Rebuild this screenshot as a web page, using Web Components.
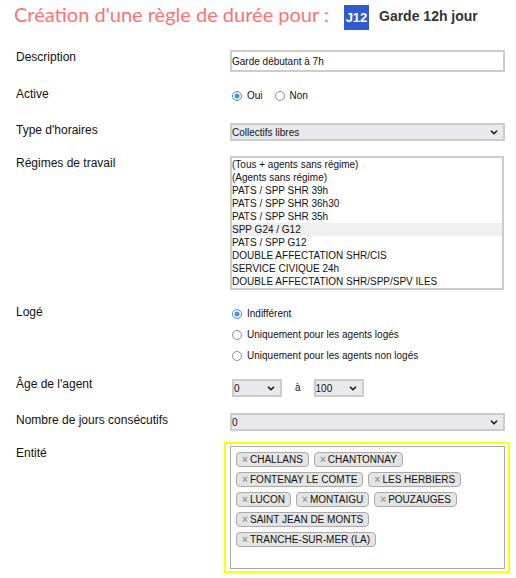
<!DOCTYPE html>
<html lang="fr">
<head>
<meta charset="utf-8">
<title>Création d'une règle de durée</title>
<style>
body { margin: 0; background: #fff; color: #111; font-family: "Liberation Sans", Arial, sans-serif; }
</style>
</head>
<body>
<rule-form></rule-form>

<template id="rule-header">
<style>
:host { display: flex; align-items: flex-start; height: 25px; padding: 5px 11px 0 14px; white-space: nowrap; }
h1 { margin: -3px 0 0; font: 400 20px/24px Lato, Carlito, sans-serif; color: #ff7272; }
.code { flex: none; width: 25px; margin-left: 15px; font-weight: 700; font-size: 13px; line-height: 25px; text-align: center; color: #fff; background: #325bcd; }
.name { margin-left: 10px; font-weight: 700; font-size: 14px; line-height: 23px; color: #333; }
</style>
<h1><slot></slot></h1>
<span class="code"><slot name="code"></slot></span>
<span class="name"><slot name="name"></slot></span>
</template>

<template id="form-row">
<style>
:host { display: grid; grid-template-columns: 214px minmax(0, 1fr); align-items: start; }
.label { font-size: 12px; line-height: 14px; }
</style>
<div class="label"><slot name="label"></slot></div>
<div class="field"><slot></slot></div>
</template>

<template id="select-box">
<style>
:host { display: grid; align-items: center; }
:host([short]) { width: 50px; }
::slotted(select) { grid-area: 1 / 1; appearance: none; box-sizing: border-box; width: 100%; height: 18px; margin: 0; padding: 1px 0 0; border: 2px solid #ccc; border-radius: 0; background: #e9e9ed; color: #111; font: 10px/13px "Liberation Sans", Arial, sans-serif; }
svg { grid-area: 1 / 1; justify-self: end; margin: 1px 7px 0 0; pointer-events: none; z-index: 1; }
</style>
<slot></slot>
<svg width="8" height="5" viewBox="0 0 8 5" aria-hidden="true"><path d="M1 .8 4 3.7 7 .8" fill="none" stroke="#111" stroke-width="1.5"/></svg>
</template>

<template id="radio-list">
<style>
:host { display: flex; gap: 12px; height: 17px; padding: 0 0 4px 2px; }
:host([vertical]) { flex-direction: column; gap: 6px; height: auto; margin-bottom: -1px; padding: 1px 0 0 2px; }
:host([vertical]) ::slotted(label) { line-height: 15px; }
::slotted(label) { display: flex; align-items: center; gap: 5px; font-size: 10px; line-height: 17px; }
</style>
<slot></slot>
</template>

<template id="tag-box">
<style>
:host { display: block; margin: -4px -5px 0 -6px; padding: 2px 3px 2px 4px; border: 2px solid #ff0; }
div { box-sizing: border-box; min-height: 123px; padding: 5px; border: 1px solid #aaa; }
ul { display: flex; flex-wrap: wrap; gap: 5px; margin: 0; padding: 0 30px 0 0; list-style: none; }
</style>
<div><ul><slot></slot></ul></div>
</template>

<template id="tag-item">
<style>
:host { display: block; }
li { display: flex; align-items: center; height: 13px; padding: 0 5px; border: 1px solid #aaa; border-radius: 4px; background: #e4e4e4; font-size: 10px; line-height: 13px; list-style: none; white-space: nowrap; }
button { width: 6px; margin: 0 2px 0 0; padding: 0; border: 0; background: none; color: #999; font: 700 10px/13px "Liberation Sans", Arial, sans-serif; }
</style>
<li><button type="button" aria-label="Retirer">×</button><slot></slot></li>
</template>

<template id="rule-form">
<style>
:host { display: block; }
form { display: flex; flex-direction: column; gap: 15px; padding: 20px 11px 5px 16px; }
.text { display: block; box-sizing: border-box; width: 100%; height: 22px; margin: 0; padding: 0; border: 2px solid #ccc; background: #fff; color: #111; font: 10px/18px "Liberation Sans", Arial, sans-serif; }
.list { display: block; appearance: none; box-sizing: border-box; width: calc(100% - 1px); height: 134px; margin: 0; padding: 0; border: 2px solid #ccc; border-radius: 0; background: #fff; overflow: hidden; font: 10px/13px "Liberation Sans", Arial, sans-serif; }
.list option { box-sizing: border-box; height: 13px; min-height: 13px; padding: 1px 0 0; line-height: 12px; color: #111; }
.list option:checked { color: #111; background: linear-gradient(#efefef, #efefef); }
input[type=radio] { appearance: none; box-sizing: border-box; width: 10px; height: 10px; margin: 0; border: 1px solid #8f8f9d; border-radius: 50%; background: #fff; }
input[type=radio]:checked { border-color: #4a90e2; background: radial-gradient(circle, #4a90e2 2px, #fff 3px); }
.range { display: flex; align-items: center; gap: 13px; height: 18px; padding: 2px 0 1px 2px; font-size: 10px; line-height: 18px; }
</style>
<rule-header>Création d'une règle de durée pour :<span slot="code">J12</span><span slot="name">Garde 12h jour</span></rule-header>
<form>
<form-row><label slot="label" for="description">Description</label><input class="text" id="description" type="text" value="Garde débutant à 7h"></form-row>
<form-row><span slot="label" id="active">Active</span>
<radio-list role="radiogroup" aria-labelledby="active">
<label><input type="radio" name="active" checked>Oui</label>
<label><input type="radio" name="active">Non</label>
</radio-list></form-row>
<form-row><label slot="label" for="type">Type d'horaires</label><select-box><select id="type"><option>Collectifs libres</option></select></select-box></form-row>
<form-row><label slot="label" for="regimes">Régimes de travail</label>
<select class="list" id="regimes" multiple size="10">
<option>(Tous + agents sans régime)</option>
<option>(Agents sans régime)</option>
<option>PATS / SPP SHR 39h</option>
<option>PATS / SPP SHR 36h30</option>
<option>PATS / SPP SHR 35h</option>
<option selected>SPP G24 / G12</option>
<option>PATS / SPP G12</option>
<option>DOUBLE AFFECTATION SHR/CIS</option>
<option>SERVICE CIVIQUE 24h</option>
<option>DOUBLE AFFECTATION SHR/SPP/SPV ILES</option>
</select></form-row>
<form-row><span slot="label" id="loge">Logé</span>
<radio-list vertical role="radiogroup" aria-labelledby="loge">
<label><input type="radio" name="loge" checked>Indifférent</label>
<label><input type="radio" name="loge">Uniquement pour les agents logés</label>
<label><input type="radio" name="loge">Uniquement pour les agents non logés</label>
</radio-list></form-row>
<form-row><label slot="label" for="age-min">Âge de l'agent</label>
<div class="range">
<select-box short><select id="age-min"><option>0</option></select></select-box>
<label for="age-max">à</label>
<select-box short><select id="age-max"><option>100</option></select></select-box>
</div></form-row>
<form-row><label slot="label" for="jours">Nombre de jours consécutifs</label><select-box><select id="jours"><option>0</option></select></select-box></form-row>
<form-row><span slot="label" id="entite">Entité</span>
<tag-box aria-labelledby="entite">
<tag-item>CHALLANS</tag-item>
<tag-item>CHANTONNAY</tag-item>
<tag-item>FONTENAY LE COMTE</tag-item>
<tag-item>LES HERBIERS</tag-item>
<tag-item>LUCON</tag-item>
<tag-item>MONTAIGU</tag-item>
<tag-item>POUZAUGES</tag-item>
<tag-item>SAINT JEAN DE MONTS</tag-item>
<tag-item>TRANCHE-SUR-MER (LA)</tag-item>
</tag-box></form-row>
</form>
</template>

<script>
for (const name of ['rule-header', 'form-row', 'select-box', 'radio-list', 'tag-box', 'tag-item', 'rule-form']) {
  customElements.define(name, class extends HTMLElement {
    constructor() {
      super();
      this.attachShadow({ mode: 'open' }).append(document.getElementById(name).content.cloneNode(true));
    }
  });
}
</script>
</body>
</html>
